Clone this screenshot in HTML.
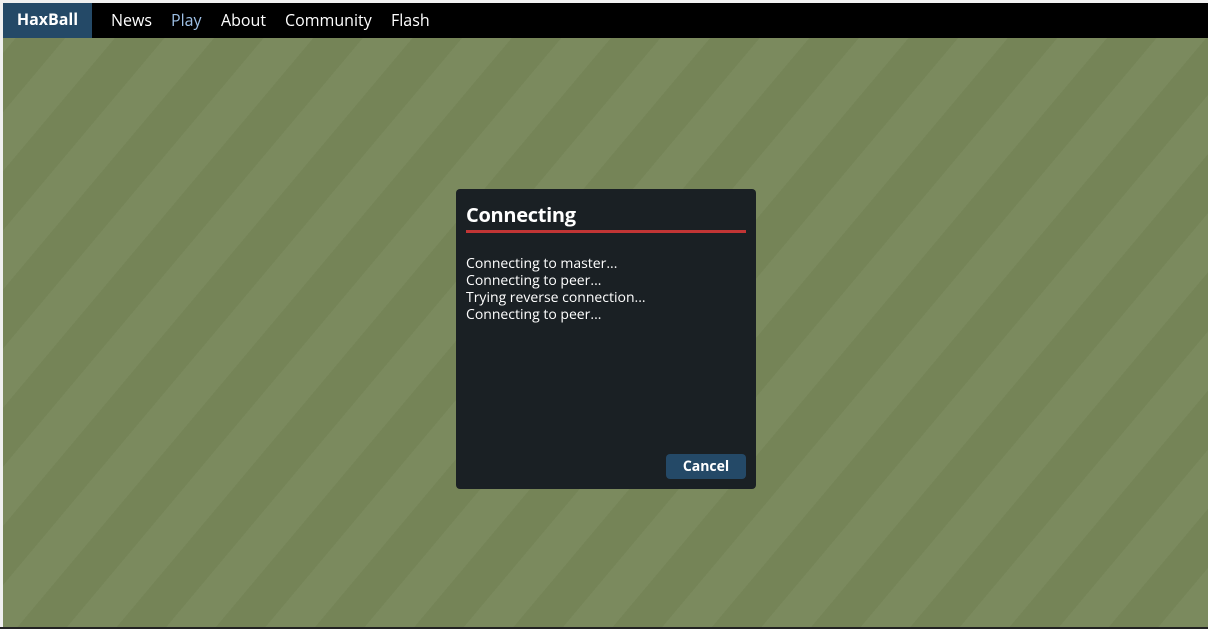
<!DOCTYPE html>
<html><head><meta charset="utf-8"><style>
html,body{margin:0;padding:0;width:1208px;height:629px;overflow:hidden;background:#f0f0f0;font-family:"Open Sans","Liberation Sans",sans-serif}
#frame{position:absolute;left:3px;top:3px;width:1205px;height:624px;overflow:hidden;
background:repeating-linear-gradient(-50deg,#7b8a5e 0 38px,#758457 38px 76px)}
#bot{position:absolute;left:0;top:627px;width:1208px;height:2px;background:#222}
#nav{position:absolute;left:0;top:0;width:100%;height:35px;background:#000;color:#fff;font-size:16px}
#nav span{position:absolute;top:6px;white-space:nowrap}
#logo{position:absolute;left:0;top:0;width:89px;height:35px;background:#244967;font-weight:bold;text-align:center;line-height:33px}
#dlg{position:absolute;left:453px;top:186px;width:300px;height:300px;background:#1a2024;border-radius:4px;color:#fff}
#dlg h1{position:absolute;left:10px;top:12px;margin:0;font-size:20px;font-weight:bold;letter-spacing:-0.3px}
#line{position:absolute;left:10px;top:41px;width:280px;height:3px;background:#c13535}
#msg{position:absolute;left:10px;top:66px;font-size:14px;line-height:17px}
#btn{position:absolute;left:210px;top:265px;width:80px;height:25px;background:#244967;border-radius:4px;font-weight:bold;font-size:14px;text-align:center;line-height:25px}
</style></head><body>
<div id="frame">
<div id="nav"><div id="logo">HaxBall</div>
<span style="left:108px">News</span><span style="left:168px;color:#9ec0e6">Play</span><span style="left:218px">About</span><span style="left:282px">Community</span><span style="left:388px">Flash</span></div>
<div id="dlg"><h1>Connecting</h1><div id="line"></div>
<div id="msg">Connecting to master...<br>Connecting to peer...<br>Trying reverse connection...<br>Connecting to peer...</div>
<div id="btn">Cancel</div></div>
</div>
<div id="bot"></div>
</body></html>
